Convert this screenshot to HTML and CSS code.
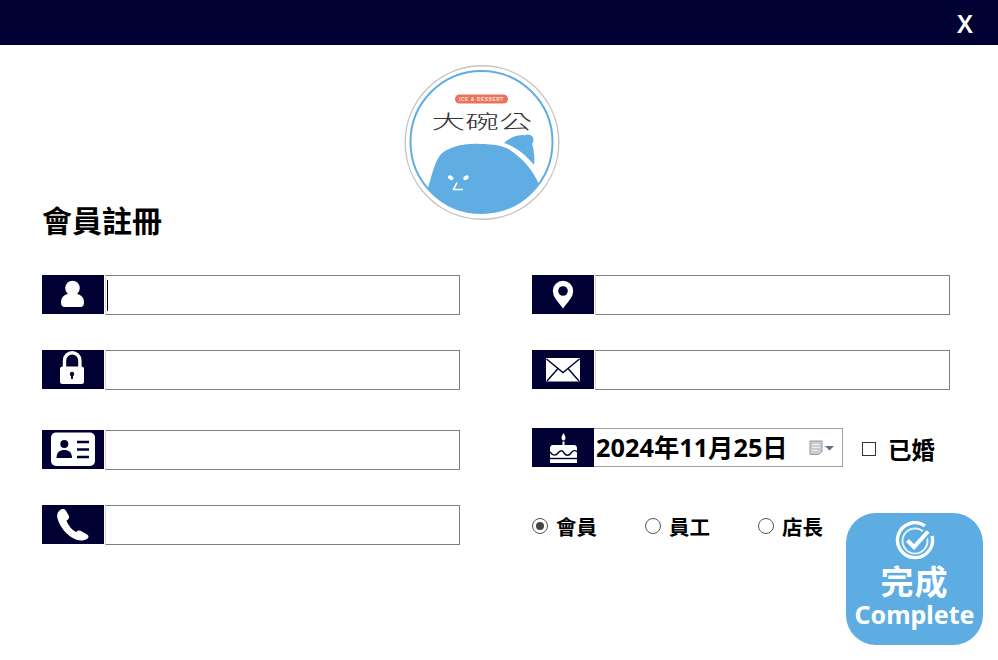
FILE: index.html
```html
<!DOCTYPE html>
<html lang="zh-Hant">

<head>
    <meta charset="UTF-8">
    <meta name="viewport" content="width=device-width, initial-scale=1.0">
    <title>會員註冊</title>
    <link rel="stylesheet" href="styles.css">
</head>

<body>
    <!-- Top bar -->
    <header class="topbar">
        <button class="close-btn" type="button">X</button>
    </header>

    <main class="page">
        <!-- Shop logo -->
        <div class="logo">
            <svg width="156" height="156" viewBox="0 0 156 156">
                <defs>
                    <clipPath id="logoClip">
                        <circle cx="77.5" cy="77" r="71"></circle>
                    </clipPath>
                </defs>
                <circle cx="78" cy="77.5" r="76.8" fill="#fff" stroke="#c4c4c4" stroke-width="1.4"></circle>
                <g clip-path="url(#logoClip)">
                    <path fill="#5fade3" d="M100 78 C106 72 113 70 120 70 L128 78 C130 86 131 93 130 100 C122 90 112 82 100 78 Z"></path>
                    <circle cx="124" cy="75" r="5.5" fill="#5fade3"></circle>
                    <path fill="#5fade3" d="M24 123 C28 110 30 98 37 89 C45 82 60 78 76 79 C90 79 100 81 106 85 C113 90 118 94 123 100 C129 107 133 114 136 122 L150 160 L10 160 Z"></path>
                </g>
                <circle cx="77.5" cy="77" r="71" fill="none" stroke="#5fade3" stroke-width="2"></circle>
                <rect x="51" y="29.5" width="53" height="9" rx="4.5" fill="#e9735c"></rect>
                <text class="logo-small" x="77.5" y="36" text-anchor="middle">ICE &amp; DESSERT</text>
                <text class="logo-name" x="27.5" y="64" textLength="101" lengthAdjust="spacingAndGlyphs">大碗公</text>
                <ellipse cx="46.7" cy="112.7" rx="3" ry="2" fill="#fff" transform="rotate(30 46.7 112.7)"></ellipse>
                <ellipse cx="62" cy="112.7" rx="3" ry="2" fill="#fff" transform="rotate(-30 62 112.7)"></ellipse>
                <path d="M53 117.5 L49.5 124.5 H59" fill="none" stroke="#fff" stroke-width="1.6"></path>
            </svg>
        </div>

        <h1 class="title">會員註冊</h1>

        <form class="form-grid">
            <div class="field">
                <span class="tile">
                    <svg width="62" height="39" viewBox="0 0 62 39">
                        <circle cx="30.5" cy="13" r="7.3" fill="#fff"></circle>
                        <path fill="#fff" d="M19 27 C19 21 24 18.5 30.5 18.5 C37 18.5 42 21 42 27 C42 30.5 41 32 38 32 H23 C20 32 19 30.5 19 27 Z"></path>
                    </svg>
                </span>
                <span class="box">
                    <input class="text-input" type="text">
                    <span class="caret"></span>
                </span>
            </div>

            <div class="field">
                <span class="tile">
                    <svg width="62" height="39" viewBox="0 0 62 39">
                        <circle cx="31" cy="16" r="10.2" fill="#fff"></circle>
                        <path fill="#fff" d="M21.5 20 C23.5 25 28 29 31 33.5 C34 29 38.5 25 40.5 20 Z"></path>
                        <circle cx="31" cy="16" r="4.8" fill="#000033"></circle>
                    </svg>
                </span>
                <span class="box"><input class="text-input" type="text"></span>
            </div>

            <div class="field">
                <span class="tile">
                    <svg width="62" height="39" viewBox="0 0 62 39">
                        <path d="M22.5 18 V10.5 a7.7 7.7 0 0 1 15.4 0 V18" fill="none" stroke="#fff" stroke-width="3.4"></path>
                        <rect x="18" y="16.5" width="24" height="17.5" rx="2.5" fill="#fff"></rect>
                        <circle cx="30" cy="24" r="2.2" fill="#000033"></circle>
                        <rect x="29" y="24" width="2" height="5" fill="#000033"></rect>
                    </svg>
                </span>
                <span class="box"><input class="text-input" type="password"></span>
            </div>

            <div class="field">
                <span class="tile">
                    <svg width="62" height="39" viewBox="0 0 62 39">
                        <rect x="14" y="8" width="34" height="23.5" rx="1" fill="#fff"></rect>
                        <path d="M14.5 9 L31 22.5 L47.5 9 M15 31 L26 18.5 M47 31 L36 18.5" fill="none" stroke="#000033" stroke-width="1.4"></path>
                    </svg>
                </span>
                <span class="box"><input class="text-input" type="email"></span>
            </div>

            <div class="field">
                <span class="tile">
                    <svg width="62" height="39" viewBox="0 0 62 39">
                        <rect x="9" y="2.5" width="44" height="33.5" rx="5" fill="#fff"></rect>
                        <circle cx="22.3" cy="14" r="4" fill="#000033"></circle>
                        <path fill="#000033" d="M14.5 28 C14.5 22 18 20 22.3 20 C26.5 20 30 22 30 28 Z"></path>
                        <path d="M35 12 H47 M35 19.5 H47 M35 27 H47" stroke="#000033" stroke-width="2.5"></path>
                    </svg>
                </span>
                <span class="box"><input class="text-input" type="text"></span>
            </div>

            <div class="field field-date">
                <span class="tile">
                    <svg width="62" height="39" viewBox="0 0 62 39">
                        <path fill="#fff" d="M31.5 5 C33 7.5 33.5 9 33.5 10 C33.5 11.5 32.5 12.5 31.5 12.5 C30.5 12.5 29.5 11.5 29.5 10 C29.5 9 30 7.5 31.5 5 Z"></path>
                        <rect x="30.5" y="13.5" width="2" height="4" fill="#fff"></rect>
                        <path fill="#fff" d="M21 17 H42 C44 17 45 18.5 45 20 V35 H18 V20 C18 18.5 19 17 21 17 Z"></path>
                        <path d="M18 24 C21 28 24 28 26 25 C28 22 31 22 32 25 C34 28 37 28 39 25 C41 22 44 22 45 24" fill="none" stroke="#000033" stroke-width="1.4"></path>
                        <path d="M18 30.5 H45" stroke="#000033" stroke-width="1.4"></path>
                    </svg>
                </span>
                <span class="date-box">
                    <span class="date-text">2024年11月25日</span>
                    <svg class="date-icon" width="25" height="16" viewBox="0 0 25 16">
                        <path d="M1 1 H13 V11.5 L10 14.5 H1 Z" fill="#c9ccd2" stroke="#9a9a9a" stroke-width="1"></path>
                        <path d="M3 4.5 H11 M3 7.5 H11 M3 10.5 H9" stroke="#eceef0" stroke-width="1"></path>
                        <path d="M16 6 H25 L20.5 10.5 Z" fill="#5d6f86"></path>
                    </svg>
                </span>
                <label class="married">
                    <span class="check-mark"></span>
                    已婚
                </label>
            </div>

            <div class="field">
                <span class="tile">
                    <svg width="62" height="39" viewBox="0 0 62 39">
                        <path fill="#fff" d="M19 4.5 C21 3.5 23 4 24 6 L27 11 C27.5 13 26.5 14.5 24.5 15.5 C26 20 30 25 34 27 C35.5 25.5 37 25 39 26 L45 29.5 C47 30.5 47 32.5 45.5 33.5 C42 36 38 36 34 34.5 C25 31 18 22 15.5 13.5 C14.5 9.5 16 6 19 4.5 Z"></path>
                    </svg>
                </span>
                <span class="box"><input class="text-input" type="tel"></span>
            </div>

            <div class="role-row">
                <div class="roles">
                    <label class="role"><span class="radio radio-on"></span>會員</label>
                    <label class="role"><span class="radio"></span>員工</label>
                    <label class="role"><span class="radio"></span>店長</label>
                </div>
                <button class="done-btn" type="button">
                    <svg width="40" height="40" viewBox="0 0 40 40">
                        <path d="M30 4.8 A17.5 17.5 0 1 0 37 15" fill="none" stroke="#fff" stroke-width="3.4"></path>
                        <circle cx="20" cy="20" r="12.5" fill="none" stroke="#fff" stroke-width="2" opacity="0.85"></circle>
                        <path d="M12.5 19.5 L19 26 L33 10.5" fill="none" stroke="#5dade2" stroke-width="8"></path>
                        <path d="M12.5 19.5 L19 26 L33 10.5" fill="none" stroke="#fff" stroke-width="4"></path>
                    </svg>
                    <span class="done-zh">完成</span>
                    <span class="done-en">Complete</span>
                </button>
            </div>
        </form>
    </main>
</body>

</html>
```

FILE: styles.css
```css
/* Basic page styling */
body {
    margin: 0;
    font-family: "Noto Sans CJK TC", "Noto Sans", sans-serif;
    color: #000;
    background-color: #fff;
}

.topbar {
    height: 45px;
    background-color: #000033;
    display: flex;
    justify-content: flex-end;
    align-items: center;
}

.close-btn {
    width: 66px;
    height: 45px;
    padding: 0;
    border: none;
    background: none;
    color: #fff;
    font-family: "Noto Sans", sans-serif;
    font-size: 25px;
    font-weight: 600;
}

.page {
    padding: 20px 0 0 42px;
}

.logo {
    width: 156px;
    height: 156px;
    margin-left: 362px;
}

.logo svg {
    display: block;
}

.logo-small {
    font-family: "Liberation Sans", sans-serif;
    font-size: 5px;
    font-weight: bold;
    letter-spacing: 0.5px;
    fill: #fbe3dc;
}

.logo-name {
    font-family: "Noto Sans CJK TC", sans-serif;
    font-size: 19px;
    font-weight: 300;
    fill: #333;
}

.title {
    margin: -21px 0 0;
    font-size: 30px;
    line-height: 38px;
    font-weight: bold;
}

/* Two columns of fields */
.form-grid {
    display: grid;
    grid-template-columns: 418px 418px;
    grid-template-rows: 75px 80px 75px auto;
    column-gap: 72px;
    margin-top: 37px;
}

.field {
    display: flex;
    align-items: flex-start;
}

.tile {
    flex: none;
    width: 62px;
    height: 39px;
    background-color: #000033;
}

.tile svg {
    display: block;
}

.box {
    flex: 1;
    position: relative;
    height: 40px;
    margin-left: 1px;
}

.text-input {
    display: block;
    box-sizing: border-box;
    width: 100%;
    height: 40px;
    padding: 0 4px;
    border: 1px solid #808080;
    border-left-color: #d8d8d8;
    background-color: #fff;
    outline: none;
}

/* Text cursor of the focused field */
.caret {
    position: absolute;
    top: 5px;
    left: 2px;
    width: 1px;
    height: 31px;
    background-color: #000;
}

.field-date {
    margin-top: -2px;
}

.date-box {
    box-sizing: border-box;
    width: 249px;
    height: 39px;
    display: flex;
    align-items: center;
    justify-content: space-between;
    border: 1px solid #a0a0a0;
    border-left: none;
    padding: 0 8px 0 2px;
}

.date-text {
    margin-top: -2px;
    font-family: "Noto Sans", "Noto Sans CJK TC", sans-serif;
    font-size: 25.3px;
    font-weight: bold;
    line-height: 36px;
    white-space: nowrap;
}

.married {
    display: flex;
    align-items: center;
    margin: 0 0 0 19px;
    height: 42px;
    font-size: 23.5px;
    font-weight: bold;
}

.check-mark {
    box-sizing: border-box;
    width: 14px;
    height: 14px;
    margin-right: 12px;
    border: 1px solid #333;
}

.role-row {
    display: flex;
    align-items: flex-start;
    justify-content: space-between;
    margin-right: -33px;
}

.roles {
    display: flex;
    gap: 48px;
    padding-top: 7px;
}

.role {
    display: flex;
    align-items: center;
    font-size: 20.5px;
    font-weight: bold;
    line-height: 28px;
}

.radio {
    box-sizing: border-box;
    width: 16px;
    height: 16px;
    margin-right: 8px;
    border: 1px solid #555;
    border-radius: 50%;
}

.radio-on {
    padding: 3px;
    background-color: #444;
    background-clip: content-box;
}

.done-btn {
    width: 137px;
    height: 132px;
    margin-top: 8px;
    padding: 8px 0 0;
    border: none;
    border-radius: 30px;
    background-color: #5dade2;
    color: #fff;
    font-family: inherit;
    display: flex;
    flex-direction: column;
    align-items: center;
}

.done-btn svg {
    display: block;
}

.done-zh {
    margin-top: 1px;
    font-size: 33px;
    font-weight: bold;
    line-height: 36px;
    letter-spacing: 1px;
}

.done-en {
    margin-top: 1px;
    font-family: "Noto Sans", sans-serif;
    font-size: 25px;
    font-weight: bold;
    line-height: 30px;
}
```
